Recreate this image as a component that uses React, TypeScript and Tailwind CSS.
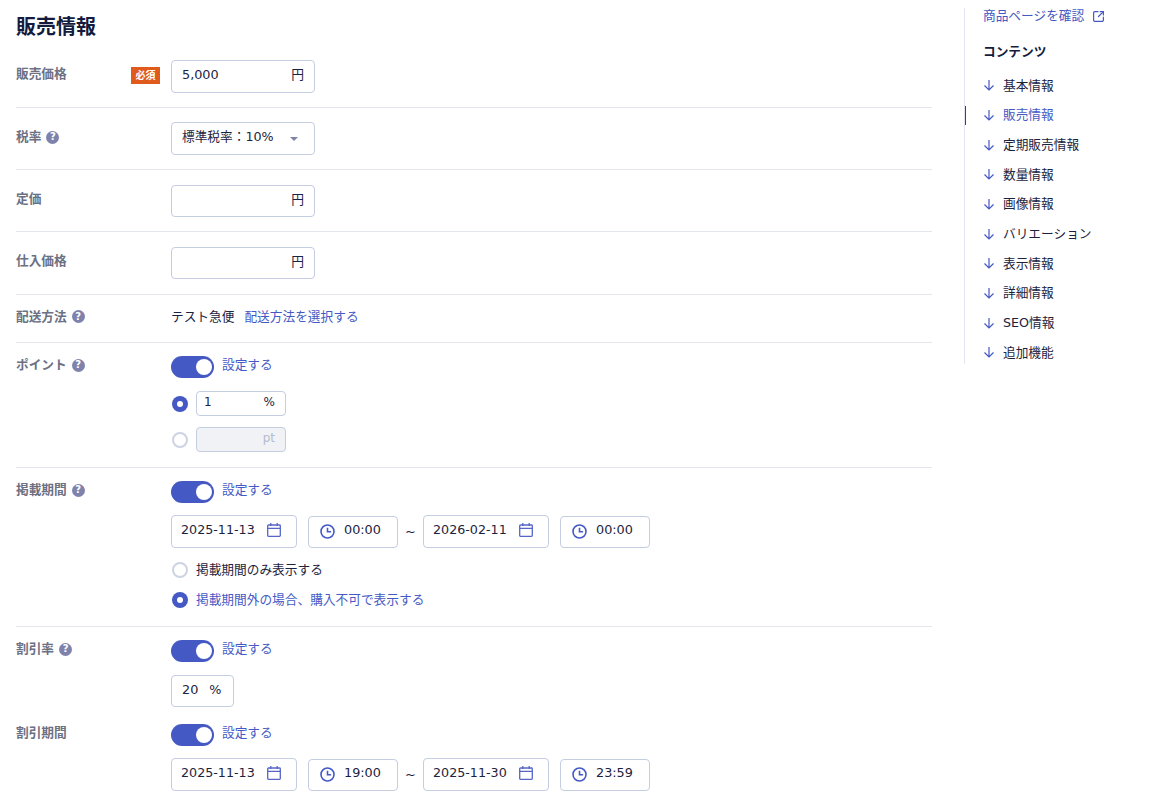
import React from "react";
import { SquareArrowOutUpRight } from "lucide-react";

const navItems = ["基本情報", "販売情報", "定期販売情報", "数量情報", "画像情報", "バリエーション", "表示情報", "詳細情報", "SEO情報", "追加機能"];

function Help() {
  return (
    <span className="ml-[5px] flex h-[13px] w-[13px] items-center justify-center rounded-full bg-[#7f83ac] text-[10px] font-bold leading-none text-white">?</span>
  );
}

function Label({ text, help }: { text: string; help?: boolean }) {
  return (
    <div className="flex w-[155px] shrink-0 items-center text-[12.7px] font-bold leading-[20px] text-[#6b7083]">
      {text}
      {help && <Help />}
    </div>
  );
}

function Toggle() {
  return (
    <div className="flex items-center gap-2">
      <div className="flex h-[22px] w-[43px] items-center justify-end rounded-full bg-[#4559c4] pr-[2px]">
        <div className="h-[16px] w-[16px] rounded-full bg-white" />
      </div>
      <span className="pb-[5px] text-[12.7px] leading-[17px] text-[#4559c4]">設定する</span>
    </div>
  );
}

function YenInput({ value, h = "h-[32px]" }: { value?: string; h?: string }) {
  return (
    <div className={`flex ${h} w-[144px] items-center justify-between rounded border border-[#c5cde0] pb-[3px] pl-[10px] pr-[10px] text-[12.8px] text-[#1c2340]`}>
      <span>{value}</span>
      <span>円</span>
    </div>
  );
}

function Radio({ on }: { on?: boolean }) {
  return on ? (
    <div className="ml-px flex h-[16px] w-[16px] shrink-0 items-center justify-center rounded-full bg-[#4559c4]">
      <div className="h-[6px] w-[6px] rounded-full bg-white" />
    </div>
  ) : (
    <div className="ml-px h-[16px] w-[16px] shrink-0 rounded-full border-2 border-[#cdd3e2]" />
  );
}

function CalendarIcon() {
  return (
    <svg viewBox="0 0 14 14" className="h-[14px] w-[14px] text-[#5566c8]" fill="none" stroke="currentColor" strokeWidth="1.3">
      <rect x="0.7" y="2" width="12.6" height="11.3" rx="0.8" />
      <path d="M0.7 5.3h12.6M3.8 0v3M10.2 0v3" />
    </svg>
  );
}

function ClockIcon() {
  return (
    <svg viewBox="0 0 15 15" className="h-[15px] w-[15px] text-[#4559c4]" fill="none" stroke="currentColor" strokeWidth="1.6">
      <circle cx="7.5" cy="7.5" r="6.5" />
      <path d="M7.5 3.8v4h3.6" />
    </svg>
  );
}

function DateBox({ value }: { value: string }) {
  return (
    <div className="flex h-[33px] w-[126px] items-center justify-between rounded border border-[#c5cde0] pb-[4px] pl-[9px] pr-[15px] text-[12.7px] text-[#1c2340]">
      <span>{value}</span>
      <CalendarIcon />
    </div>
  );
}

function TimeBox({ value }: { value: string }) {
  return (
    <div className="flex h-[32px] w-[90px] items-center gap-[9px] rounded border border-[#c5cde0] pl-[11px] text-[12.8px] text-[#1c2340]">
      <ClockIcon />
      <span className="mb-[4px]">{value}</span>
    </div>
  );
}

function PeriodRow({ a, b, c, d }: { a: string; b: string; c: string; d: string }) {
  return (
    <div className="flex items-center">
      <DateBox value={a} />
      <div className="w-[11px]" />
      <TimeBox value={b} />
      <span className="w-[25px] text-center text-[13px] text-[#1c2340]">~</span>
      <DateBox value={c} />
      <div className="w-[11px]" />
      <TimeBox value={d} />
    </div>
  );
}

export default function App() {
  return (
    <div
      className="flex h-[800px] w-[1150px] overflow-hidden bg-white"
      style={{ fontFamily: "'DejaVu Sans', 'Noto Sans CJK JP', sans-serif" }}
    >
      {/* Main form */}
      <div className="w-[932px] shrink-0 pl-4">
        <h1 className="mt-[14px] mb-[18px] text-[20px] font-bold leading-[26px] text-[#141b3c]">販売情報</h1>

        <div className="flex items-start border-b border-[#e3e6ef] pt-[2px] pb-[14px]">
          <div className="flex h-[31px] w-[155px] shrink-0 items-center justify-between pr-[11px]">
            <span className="pb-[3px] text-[12.7px] font-bold text-[#6b7083]">販売価格</span>
            <span className="flex h-[17px] w-[29px] items-center justify-center bg-[#e05a1c] text-[10px] font-bold text-white">必須</span>
          </div>
          <YenInput value="5,000" h="h-[33px]" />
        </div>

        <div className="flex items-start border-b border-[#e3e6ef] pt-[14px] pb-[14px]">
          <div className="mt-[5px]"><Label text="税率" help /></div>
          <div className="flex h-[33px] w-[144px] items-center justify-between rounded border border-[#c5cde0] pl-[10px] pr-[16px] text-[12.7px] text-[#1c2340]">
            <span className="pb-[3px]">標準税率：10%</span>
            <span className="h-0 w-0 border-x-[4px] border-t-[4px] border-x-transparent border-t-[#7f83ac]" />
          </div>
        </div>

        <div className="flex items-start border-b border-[#e3e6ef] pt-[15px] pb-[14px]">
          <div className="mt-[4px]"><Label text="定価" /></div>
          <YenInput />
        </div>

        <div className="flex items-start border-b border-[#e3e6ef] pt-[15px] pb-[15px]">
          <div className="mt-[4px]"><Label text="仕入価格" /></div>
          <YenInput />
        </div>

        <div className="flex h-[48px] items-center border-b border-[#e3e6ef] pb-[4px]">
          <Label text="配送方法" help />
          <span className="text-[12.7px] text-[#1c2340]">テスト急便</span>
          <span className="ml-[10px] text-[12.7px] text-[#4559c4]">配送方法を選択する</span>
        </div>

        <div className="flex items-start border-b border-[#e3e6ef] pt-[13px] pb-[15px]">
          <div className="-mt-px"><Label text="ポイント" help /></div>
          <div className="flex flex-col">
            <Toggle />
            <div className="mt-[13px] flex items-center gap-[8px]">
              <Radio on />
              <div className="flex h-[25px] w-[90px] items-center justify-between rounded border border-[#c5cde0] pb-[3px] pl-[7px] pr-[10px] text-[12px] text-[#1c2340]">
                <span>1</span>
                <span>%</span>
              </div>
            </div>
            <div className="mt-[11px] flex items-center gap-[8px]">
              <Radio />
              <div className="flex h-[25px] w-[90px] items-center justify-end rounded border border-[#c5cde0] bg-[#f0f2f6] pb-[3px] pr-[10px] text-[12px] text-[#b4bccd]">pt</div>
            </div>
          </div>
        </div>

        <div className="flex items-start border-b border-[#e3e6ef] pt-[13px] pb-[17px]">
          <div className="-mt-px"><Label text="掲載期間" help /></div>
          <div className="flex flex-col">
            <Toggle />
            <div className="mt-[12px]">
              <PeriodRow a="2025-11-13" b="00:00" c="2026-02-11" d="00:00" />
            </div>
            <div className="mt-[13px] flex h-[18px] items-center gap-[8px] text-[12.7px] text-[#1c2340]">
              <Radio />
              <span>掲載期間のみ表示する</span>
            </div>
            <div className="mt-[12px] flex h-[18px] items-center gap-[8px] text-[12.7px] text-[#4559c4]">
              <Radio on />
              <span>掲載期間外の場合、購入不可で表示する</span>
            </div>
          </div>
        </div>

        <div className="flex items-start pt-[13px]">
          <div className="-mt-px"><Label text="割引率" help /></div>
          <div className="flex flex-col">
            <Toggle />
            <div className="mt-[13px] flex h-[32px] w-[63px] items-center gap-[11px] rounded border border-[#c5cde0] pb-[3px] pl-[10px] text-[12.8px] text-[#1c2340]">
              <span>20</span>
              <span>%</span>
            </div>
          </div>
        </div>

        <div className="mt-[17px] flex items-start">
          <div className="-mt-px"><Label text="割引期間" /></div>
          <div className="flex flex-col">
            <Toggle />
            <div className="mt-[12px]">
              <PeriodRow a="2025-11-13" b="19:00" c="2025-11-30" d="23:59" />
            </div>
          </div>
        </div>
      </div>

      {/* Side navigation */}
      <div className="ml-[32px] mt-2 h-[356px] w-[160px] border-l border-[#e3e6ef] pl-[18px]">
        <div className="flex items-center gap-[8px] text-[12.7px] leading-[16px] text-[#4559c4]">
          商品ページを確認
          <SquareArrowOutUpRight className="h-[13px] w-[13px]" strokeWidth={2.2} />
        </div>
        <div className="mt-[19px] text-[12.7px] font-bold leading-[18px] text-[#141b3c]">コンテンツ</div>
        <div className="mt-[9.3px] flex flex-col">
          {navItems.map((item, i) => (
            <div
              key={item}
              className={`relative flex h-[29.7px] items-center gap-[8px] text-[12.7px] ${i === 1 ? "text-[#4559c4]" : "text-[#1c2340]"}`}
            >
              {i === 1 && <span className="absolute left-[-18px] top-[6px] h-[19px] w-px bg-[#3a3f6b]" />}
              <svg viewBox="0 0 12 12" className="h-[12px] w-[12px] text-[#4559c4]" fill="none" stroke="currentColor" strokeWidth="1.2">
                <path d="M6 1v10M1.5 6.5 6 11l4.5-4.5" />
              </svg>
              {item}
            </div>
          ))}
        </div>
      </div>
    </div>
  );
}
